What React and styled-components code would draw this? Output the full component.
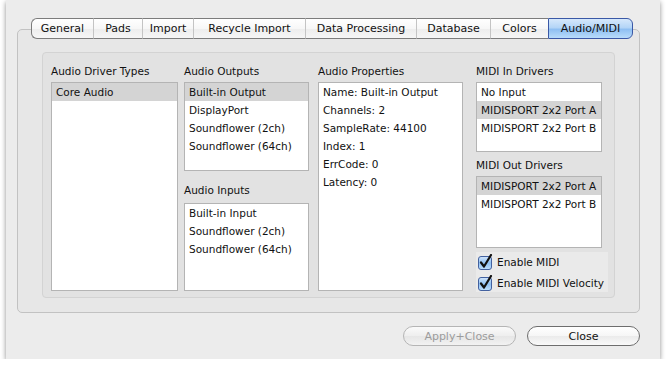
import styled, { createGlobalStyle } from 'styled-components';

const GlobalStyle = createGlobalStyle`
  html, body {
    margin: 0;
    padding: 0;
    background: #ffffff;
  }
  body {
    font-family: "DejaVu Sans", "Liberation Sans", sans-serif;
    font-size: 10.5px;
    color: #111;
  }
`;

const Window = styled.div`
  box-sizing: border-box;
  margin-left: 6px;
  width: 654px;
  height: 359px;
  background: #ececec;
  box-shadow: 0 2px 5px rgba(0, 0, 0, 0.45);
  display: flex;
  flex-direction: column;
  padding: 18px 20px 0 11px;
`;

const TabRow = styled.div`
  position: relative;
  z-index: 1;
  display: flex;
  height: 21px;
  margin: 0 0 -10px 14px;
`;

const Tab = styled.div`
  box-sizing: border-box;
  width: ${p => p.$w}px;
  display: flex;
  align-items: center;
  justify-content: center;
  border-top: 1px solid ${p => (p.$active ? '#3a58a6' : '#7c7c7c')};
  border-bottom: 1px solid ${p => (p.$active ? '#3a58a6' : '#7c7c7c')};
  border-left: 1px solid ${p => (p.$active ? '#3a58a6' : p.$first ? '#7c7c7c' : '#c4c4c4')};
  border-right: ${p => (p.$last ? '1px solid #3a58a6' : 'none')};
  border-radius: ${p => (p.$first ? '6px 0 0 6px' : p.$last ? '0 6px 6px 0' : '0')};
  background: ${p =>
    p.$active
      ? 'linear-gradient(#d6e8fb 0%, #b4d5f7 45%, #8fbff2 55%, #b9dcfb 100%)'
      : 'linear-gradient(#ffffff 0%, #f7f7f7 50%, #ededed 52%, #f6f6f6 100%)'};
  color: #111;
  font-size: 11px;
  white-space: nowrap;
`;

const Pane = styled.div`
  box-sizing: border-box;
  width: 623px;
  height: 284px;
  border: 1px solid #c2c2c2;
  border-radius: 5px;
  background: #e7e7e7;
  padding: 22px 0 0 24px;
`;

const Group = styled.div`
  box-sizing: border-box;
  width: 573px;
  height: 246px;
  border: 1px solid #d3d3d3;
  border-radius: 4px;
  background: #e2e2e2;
  padding: 9px 0 0 8px;
  display: flex;
`;

const Column = styled.div`
  display: flex;
  flex-direction: column;
  width: ${p => p.$w}px;
  margin-left: ${p => p.$ml || 0}px;
`;

const Label = styled.div`
  height: 18px;
  line-height: 18px;
  margin-bottom: ${p => p.$mb ?? 2}px;
  margin-top: ${p => p.$mt || 0}px;
  white-space: nowrap;
`;

const List = styled.div`
  box-sizing: border-box;
  height: ${p => p.$h}px;
  background: #ffffff;
  border: 1px solid #b4b4b4;
  overflow: hidden;
`;

const Row = styled.div`
  height: 18px;
  line-height: 18px;
  padding-left: 4px;
  white-space: nowrap;
  background: ${p => (p.$selected ? '#d4d4d4' : 'transparent')};
`;

const CheckPanel = styled.div`
  margin-top: 4px;
  width: 132px;
  height: 40px;
  background: #eaeaea;
  display: flex;
  flex-direction: column;
  justify-content: center;
  gap: 3px;
`;

const CheckLine = styled.label`
  display: flex;
  align-items: center;
  gap: 4px;
  height: 18px;
  padding-left: 2px;
  white-space: nowrap;
`;

const ButtonRow = styled.div`
  display: flex;
  justify-content: flex-end;
  gap: 11px;
  margin-top: 13px;
`;

const Button = styled.button`
  box-sizing: border-box;
  width: 113px;
  height: 20px;
  border-radius: 10px;
  border: 1px solid ${p => (p.disabled ? '#b5b5b5' : '#6e6e6e')};
  background: ${p =>
    p.disabled
      ? 'linear-gradient(#fafafa, #eeeeee 50%, #e6e6e6 52%, #f2f2f2)'
      : 'linear-gradient(#ffffff, #f6f6f6 50%, #ebebeb 52%, #fafafa)'};
  color: ${p => (p.disabled ? '#9c9c9c' : '#111')};
  font-family: "DejaVu Sans", "Liberation Sans", sans-serif;
  font-size: 11px;
  padding: 0;
`;

function CheckBox() {
  return (
    <svg width="15" height="16" viewBox="0 0 15 16">
      <defs>
        <linearGradient id="cbg" x1="0" y1="0" x2="0" y2="1">
          <stop offset="0" stopColor="#d3e6fb" />
          <stop offset="0.5" stopColor="#8fc0f3" />
          <stop offset="1" stopColor="#bfe0fd" />
        </linearGradient>
      </defs>
      <rect x="0.5" y="2.5" width="13" height="13" rx="2.5" fill="url(#cbg)" stroke="#43619f" />
      <path d="M3 8.5 L6 12.5 L13 1" fill="none" stroke="#111" strokeWidth="2.2" strokeLinecap="round" strokeLinejoin="round" />
    </svg>
  );
}

const tabs = [
  ['General', 62],
  ['Pads', 49],
  ['Import', 51],
  ['Recycle Import', 112],
  ['Data Processing', 111],
  ['Database', 74],
  ['Colors', 58],
  ['Audio/MIDI', 85],
];

const outputs = ['Built-in Output', 'DisplayPort', 'Soundflower (2ch)', 'Soundflower (64ch)'];
const inputs = ['Built-in Input', 'Soundflower (2ch)', 'Soundflower (64ch)'];
const props = ['Name: Built-in Output', 'Channels: 2', 'SampleRate: 44100', 'Index: 1', 'ErrCode: 0', 'Latency: 0'];
const midiIn = ['No Input', 'MIDISPORT 2x2 Port A', 'MIDISPORT 2x2 Port B'];
const midiOut = ['MIDISPORT 2x2 Port A', 'MIDISPORT 2x2 Port B'];

export default function App() {
  return (
    <>
      <GlobalStyle />
      <Window>
        <TabRow>
          {tabs.map(([name, w], i) => (
            <Tab key={name} $w={w} $first={i === 0} $last={i === tabs.length - 1} $active={name === 'Audio/MIDI'}>
              {name}
            </Tab>
          ))}
        </TabRow>
        <Pane>
          <Group>
            <Column $w={127}>
              <Label>Audio Driver Types</Label>
              <List $h={209}>
                <Row $selected>Core Audio</Row>
              </List>
            </Column>
            <Column $w={125} $ml={6}>
              <Label>Audio Outputs</Label>
              <List $h={89}>
                {outputs.map((o, i) => (
                  <Row key={o} $selected={i === 0}>{o}</Row>
                ))}
              </List>
              <Label $mt={10} $mb={4}>Audio Inputs</Label>
              <List $h={88}>
                {inputs.map(o => (
                  <Row key={o}>{o}</Row>
                ))}
              </List>
            </Column>
            <Column $w={145} $ml={9}>
              <Label>Audio Properties</Label>
              <List $h={209}>
                {props.map(o => (
                  <Row key={o}>{o}</Row>
                ))}
              </List>
            </Column>
            <Column $w={126} $ml={13}>
              <Label>MIDI In Drivers</Label>
              <List $h={70}>
                {midiIn.map((o, i) => (
                  <Row key={o} $selected={i === 1}>{o}</Row>
                ))}
              </List>
              <Label $mt={4} $mb={2}>MIDI Out Drivers</Label>
              <List $h={72}>
                {midiOut.map((o, i) => (
                  <Row key={o} $selected={i === 0}>{o}</Row>
                ))}
              </List>
              <CheckPanel>
                <CheckLine>
                  <CheckBox />
                  Enable MIDI
                </CheckLine>
                <CheckLine>
                  <CheckBox />
                  Enable MIDI Velocity
                </CheckLine>
              </CheckPanel>
            </Column>
          </Group>
        </Pane>
        <ButtonRow>
          <Button disabled>Apply+Close</Button>
          <Button>Close</Button>
        </ButtonRow>
      </Window>
    </>
  );
}
